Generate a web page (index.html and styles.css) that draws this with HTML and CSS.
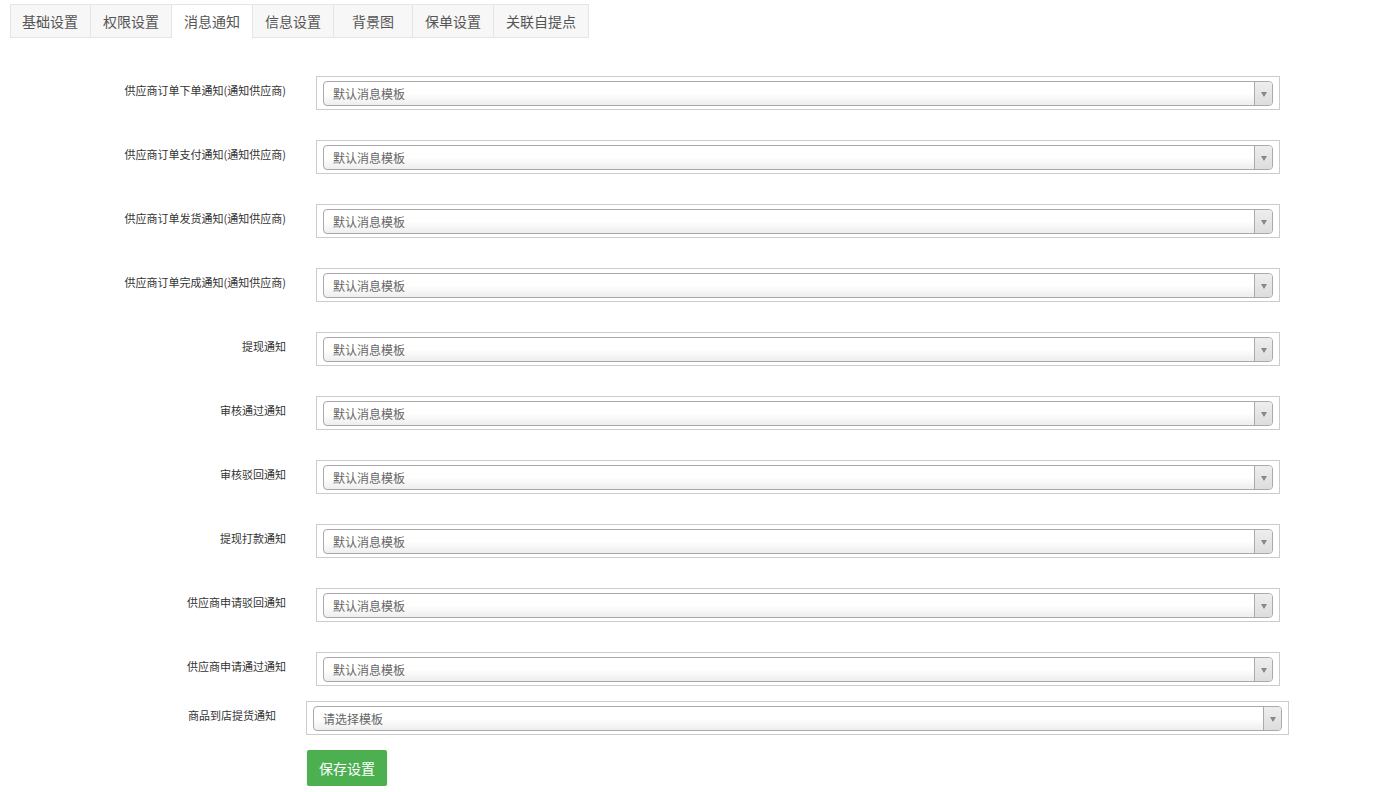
FILE: index.html
```html
<!DOCTYPE html>
<html lang="zh">
<head>
<meta charset="utf-8">
<title>消息通知</title>
<link rel="stylesheet" href="styles.css">
</head>
<body>
<ul class="tabs">
  <li class="tab">基础设置</li>
  <li class="tab">权限设置</li>
  <li class="tab active">消息通知</li>
  <li class="tab">信息设置</li>
  <li class="tab">背景图</li>
  <li class="tab">保单设置</li>
  <li class="tab">关联自提点</li>
</ul>
<form class="form">
  <div class="row"><label class="lbl">供应商订单下单通知(通知供应商)</label><div class="box"><div class="sel"><span class="val">默认消息模板</span><span class="arrow"><b></b></span></div></div></div>
  <div class="row"><label class="lbl">供应商订单支付通知(通知供应商)</label><div class="box"><div class="sel"><span class="val">默认消息模板</span><span class="arrow"><b></b></span></div></div></div>
  <div class="row"><label class="lbl">供应商订单发货通知(通知供应商)</label><div class="box"><div class="sel"><span class="val">默认消息模板</span><span class="arrow"><b></b></span></div></div></div>
  <div class="row"><label class="lbl">供应商订单完成通知(通知供应商)</label><div class="box"><div class="sel"><span class="val">默认消息模板</span><span class="arrow"><b></b></span></div></div></div>
  <div class="row"><label class="lbl">提现通知</label><div class="box"><div class="sel"><span class="val">默认消息模板</span><span class="arrow"><b></b></span></div></div></div>
  <div class="row"><label class="lbl">审核通过通知</label><div class="box"><div class="sel"><span class="val">默认消息模板</span><span class="arrow"><b></b></span></div></div></div>
  <div class="row"><label class="lbl">审核驳回通知</label><div class="box"><div class="sel"><span class="val">默认消息模板</span><span class="arrow"><b></b></span></div></div></div>
  <div class="row"><label class="lbl">提现打款通知</label><div class="box"><div class="sel"><span class="val">默认消息模板</span><span class="arrow"><b></b></span></div></div></div>
  <div class="row"><label class="lbl">供应商申请驳回通知</label><div class="box"><div class="sel"><span class="val">默认消息模板</span><span class="arrow"><b></b></span></div></div></div>
  <div class="row"><label class="lbl">供应商申请通过通知</label><div class="box"><div class="sel"><span class="val">默认消息模板</span><span class="arrow"><b></b></span></div></div></div>
  <div class="row row-last"><label class="lbl">商品到店提货通知</label><div class="box"><div class="sel"><span class="val">请选择模板</span><span class="arrow"><b></b></span></div></div></div>
  <div class="actions"><button type="button" class="btn">保存设置</button></div>
</form>
</body>
</html>
```

FILE: styles.css
```css
* { box-sizing: border-box; }
body {
  margin: 0;
  background: #fff;
  font-family: "Noto Sans CJK SC", "Liberation Sans", sans-serif;
  color: #333;
}
.tabs {
  list-style: none;
  margin: 4px 0 0 10px;
  padding: 0;
  display: flex;
}
.tab {
  min-width: 79px;
  height: 34px;
  padding: 0 12px;
  border: 1px solid #e5e5e5;
  border-left: none;
  background: #f7f7f7;
  color: #555;
  font-size: 14px;
  line-height: 32px;
  text-align: center;
}
.tab:first-child {
  border-left: 1px solid #e5e5e5;
  padding-left: 11px;
}
.tab.active {
  background: #fff;
  border-bottom-color: #fff;
  height: 35px;
}
.form {
  margin-top: 37px;
}
.row {
  display: flex;
  align-items: flex-start;
  margin-bottom: 30px;
}
.lbl {
  width: 286px;
  padding-top: 7px;
  text-align: right;
  font-size: 11px;
  line-height: 15px;
  color: #333;
}
.box {
  margin-left: 30px;
  width: 964px;
  height: 34px;
  border: 1px solid #ccc;
  padding: 4px 6px 3px;
}
.row-last { margin-top: -15px; margin-bottom: 15px; }
.row-last .lbl { width: 276px; }
.row-last .box { width: 983px; }
.sel {
  display: flex;
  height: 25px;
  border: 1px solid #aaa;
  border-radius: 4px;
  background: linear-gradient(#ffffff 0%, #ffffff 50%, #eeeeee 100%);
  overflow: hidden;
}
.val {
  flex: 1;
  padding-left: 9px;
  font-size: 12px;
  line-height: 23px;
  color: #666;
}
.arrow {
  width: 18px;
  border-left: 1px solid #aaa;
  background: linear-gradient(#eeeeee, #dddddd);
  display: flex;
  align-items: center;
  justify-content: center;
}
.arrow b {
  width: 0;
  height: 0;
  border-left: 3px solid transparent;
  border-right: 3px solid transparent;
  border-top: 5px solid #888;
  margin-top: 2px;
}
.actions {
  padding-left: 307px;
}
.btn {
  width: 80px;
  height: 36px;
  border: none;
  border-radius: 2px;
  background: #4caf50;
  color: #fff;
  font-family: "Noto Sans CJK SC", "Liberation Sans", sans-serif;
  font-size: 14px;
  box-shadow: 0 1px 2px rgba(0,0,0,0.15);
}
```
